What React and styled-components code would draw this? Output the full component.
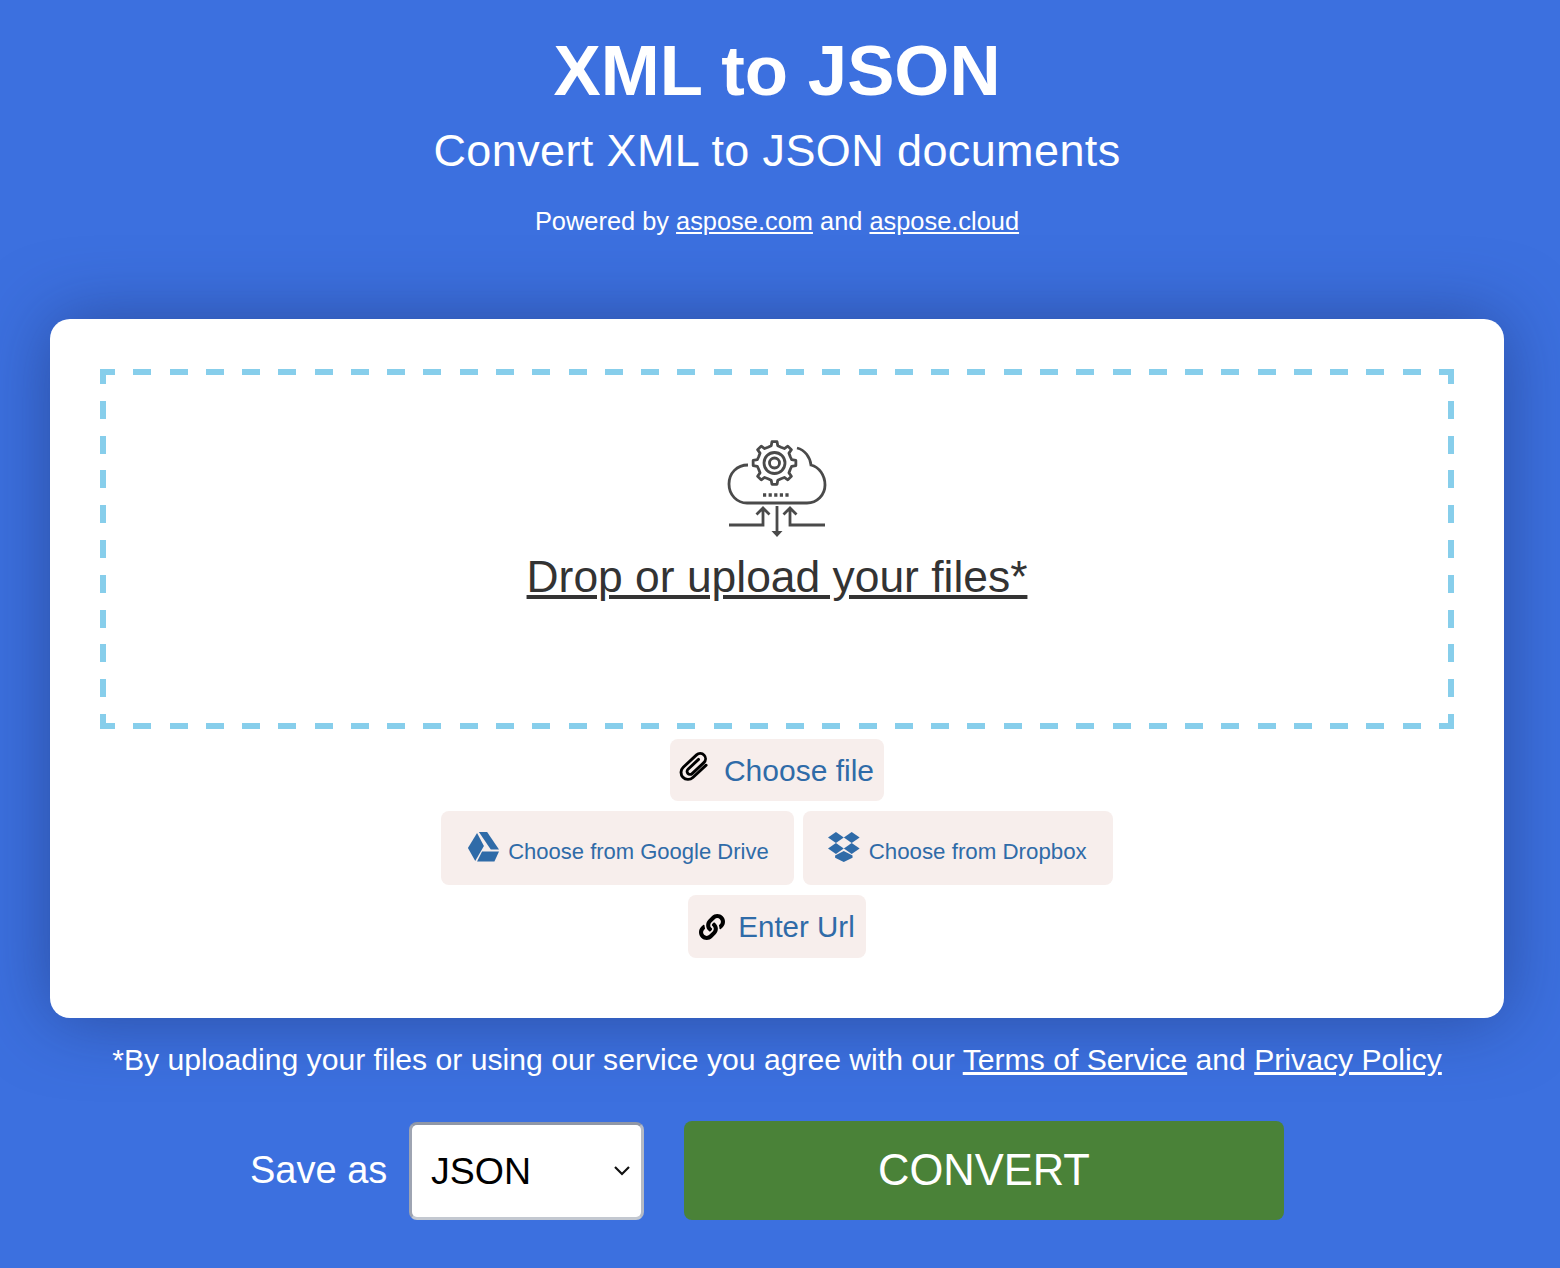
import React from "react";
import styled, { createGlobalStyle } from "styled-components";
import { FaLink } from "react-icons/fa";

const Global = createGlobalStyle`
  html, body { margin: 0; padding: 0; background: #3c70df; }
  body { font-family: "Liberation Sans", Arial, sans-serif; }
  * { box-sizing: border-box; }
`;

const Page = styled.div`
  width: 1560px;
  height: 1268px;
  overflow: hidden;
  padding: 0 56px 0 50px;
  background: #3c70df;
  color: #fff;
  display: flex;
  flex-direction: column;
  align-items: stretch;
`;

const Header = styled.header`
  height: 319px;
  display: flex;
  flex-direction: column;
  align-items: center;
`;

const Title = styled.h1`
  margin: 32px 0 0;
  font-size: 70.8px;
  line-height: 78px;
  font-weight: 700;
`;

const Subtitle = styled.h2`
  margin: 15px 0 0;
  font-size: 45px;
  line-height: 52px;
  font-weight: 400;
  letter-spacing: 0.38px;
`;

const Powered = styled.p`
  margin: 29px 0 0;
  font-size: 25.4px;
  line-height: 30px;
`;

const InlineLink = styled.a`
  color: #fff;
  text-decoration: underline;
`;

const Card = styled.main`
  height: 699px;
  background: #fff;
  border-radius: 20px;
  padding: 50px 50px 0;
  box-shadow: 0 0 70px rgba(30, 50, 110, 0.55);
  display: flex;
  flex-direction: column;
  align-items: center;
`;

const dash = "#87ceeb";
const DropZone = styled.div`
  width: 1354px;
  height: 360px;
  flex: none;
  display: flex;
  flex-direction: column;
  align-items: center;
  padding-top: 71px;
  background-image:
    repeating-linear-gradient(to right, ${dash} -3px, ${dash} 15px, transparent 15px, transparent 33.27px),
    repeating-linear-gradient(to right, ${dash} -3px, ${dash} 15px, transparent 15px, transparent 33.27px),
    repeating-linear-gradient(to bottom, ${dash} -3px, ${dash} 15px, transparent 15px, transparent 31.8px),
    repeating-linear-gradient(to bottom, ${dash} -3px, ${dash} 15px, transparent 15px, transparent 31.8px);
  background-size: 100% 6px, 100% 6px, 6px 100%, 6px 100%;
  background-position: 0 0, 0 100%, 0 0, 100% 0;
  background-repeat: no-repeat;
`;

const CloudIcon = styled.svg`
  width: 100px;
  height: 100px;
  display: block;
  flex: none;
  fill: none;
  stroke: #4a4a4a;
  stroke-width: 2.8;
`;

const DropLabel = styled.a`
  margin: 9px 0 0;
  font-size: 44.4px;
  line-height: 56px;
  color: #333;
  text-decoration: underline;
`;

const ButtonRow = styled.div`
  display: flex;
  justify-content: center;
  gap: 9px;
  margin-top: 10px;
`;

const SourceButton = styled.button`
  height: ${(p) => p.$h}px;
  padding: ${(p) => p.$pad};
  border: 0;
  border-radius: 8px;
  background: #f7eeec;
  color: #2f6ba8;
  font-family: inherit;
  font-size: ${(p) => p.$size}px;
  display: flex;
  align-items: center;
  gap: ${(p) => p.$gap}px;
  white-space: nowrap;
`;

const DarkIcon = styled.span`
  display: flex;
  color: #000;
  transform: translateY(${(p) => p.$up || 0}px);
`;

const BlueIcon = styled.svg`
  display: block;
  flex: none;
  fill: #2f6ba8;
  transform: translateY(-5px);
`;

const Notice = styled.p`
  margin: 24px 0 0;
  text-align: center;
  font-size: 30.15px;
  line-height: 36px;
  white-space: nowrap;
`;

const SaveRow = styled.div`
  display: flex;
  align-items: center;
  margin: 43px 0 0 200px;
`;

const SaveLabel = styled.label`
  font-size: 38px;
  width: 159px;
`;

const SelectWrap = styled.div`
  position: relative;
  width: 235px;
  height: 98px;
`;

const Select = styled.select`
  width: 100%;
  height: 100%;
  appearance: none;
  background: #fff;
  border-width: 3px;
  border-style: solid;
  border-color: #9097a6 #b4b9c4 #c3c8d0 #9ea4b2;
  border-radius: 8px;
  padding: 0 0 0 19px;
  font-family: inherit;
  font-size: 37.5px;
  color: #000;
  outline: 0;
`;

const Chevron = styled.svg`
  position: absolute;
  right: 13px;
  top: 43px;
  width: 18px;
  height: 11px;
  fill: none;
  stroke: #111;
  stroke-width: 2.2;
  pointer-events: none;
`;

const Convert = styled.button`
  margin-left: 40px;
  width: 600px;
  height: 99px;
  border: 0;
  border-radius: 8px;
  background: #4a8238;
  color: #fff;
  font-family: inherit;
  font-size: 43.5px;
`;

const Clip = () => (
  <svg width="32" height="32" viewBox="0 0 30 30" fill="none" stroke="#000" strokeWidth="2.7" strokeLinecap="round">
    <g transform="rotate(47 15 15)">
      <path d="M21.5 5.5 V22.5 A6.6 6.6 0 0 1 8.3 22.5 V5.5 A5 5 0 0 1 18.3 5.5 V20.5 A2.8 2.8 0 0 1 12.7 20.5 V7" />
    </g>
  </svg>
);

const DriveIcon = () => (
  <BlueIcon width="32" height="30" viewBox="0 0 35 30" preserveAspectRatio="none">
    <path d="M11 1 L1 16 L9 29 L18.5 14 Z" />
    <path d="M13 0 H22 L35 17.5 H26 Z" />
    <path d="M11 29.5 H30 L35 19.5 H16.5 Z" />
  </BlueIcon>
);

const DropboxIcon = () => (
  <BlueIcon width="32" height="30" viewBox="0 0 27 30" preserveAspectRatio="none">
    <path d="M6.7 0 L13.3 5.5 L6.7 11 L0 5.5 Z" />
    <path d="M20 0 L26.7 5.5 L20 11 L13.4 5.5 Z" />
    <path d="M6.7 11 L13.3 16.5 L6.7 22 L0 16.5 Z" />
    <path d="M20 11 L26.7 16.5 L20 22 L13.4 16.5 Z" />
    <path d="M6 23.5 L13.3 19 L20.7 23.5 V25.7 L13.3 30 L6 25.7 Z" />
  </BlueIcon>
);

const gearPath = () => {
  const cx = 47.5;
  const cy = 23;
  const teeth = 8;
  const pts = [];
  for (let i = 0; i < teeth; i++) {
    const a = (i * 2 * Math.PI) / teeth - Math.PI / 2;
    const step = (2 * Math.PI) / teeth;
    [
      [-0.5, 17],
      [-0.24, 17.5],
      [-0.15, 21.5],
      [0.15, 21.5],
      [0.24, 17.5],
    ].forEach(([f, r]) => {
      const t = a + f * step;
      pts.push(`${(cx + r * Math.cos(t)).toFixed(2)} ${(cy + r * Math.sin(t)).toFixed(2)}`);
    });
  }
  return `M${pts.join(" L")} Z`;
};

export default function App() {
  return (
    <Page>
      <Global />
      <Header>
        <Title>XML to JSON</Title>
        <Subtitle>Convert XML to JSON documents</Subtitle>
        <Powered>
          Powered by <InlineLink href="#">aspose.com</InlineLink> and{" "}
          <InlineLink href="#">aspose.cloud</InlineLink>
        </Powered>
      </Header>
      <Card>
        <DropZone>
          <CloudIcon viewBox="0 0 100 100">
            <path d="M21 25 C10 25 2 33 2 44 C2 55 10 63 20 63 H80 C90 63 98 55 98 45 C98 35 92 27 84 25 C83 17 78 10 70 8" />
            <path d={gearPath()} strokeLinejoin="round" />
            <circle cx="47.5" cy="23" r="10.5" />
            <circle cx="47.5" cy="23" r="5" />
            <path d="M36 55 H64" strokeDasharray="3.2 2.4" strokeWidth="3.4" />
            <path d="M2 85 H36 V68 M29.5 74.5 L36 68 L42.5 74.5" />
            <path d="M98 85 H63 V68 M56.5 74.5 L63 68 L69.5 74.5" />
            <path d="M50 66 V92" />
            <path d="M44.5 91 L50 97 L55.5 91 Z" fill="#4a4a4a" stroke="none" />
          </CloudIcon>
          <DropLabel href="#">Drop or upload your files*</DropLabel>
        </DropZone>
        <ButtonRow>
          <SourceButton $h={62} $pad="1px 10px 0 8px" $size={30} $gap={14}>
            <DarkIcon $up={-4}><Clip /></DarkIcon>
            Choose file
          </SourceButton>
        </ButtonRow>
        <ButtonRow>
          <SourceButton $h={74} $pad="8px 25px 0 26px" $size={22} $gap={9}>
            <DriveIcon />
            Choose from Google Drive
          </SourceButton>
          <SourceButton $h={74} $pad="8px 26px 0 25px" $size={22.3} $gap={9}>
            <DropboxIcon />
            Choose from Dropbox
          </SourceButton>
        </ButtonRow>
        <ButtonRow>
          <SourceButton $h={63} $pad="1px 11px 0 11px" $size={29.5} $gap={13}>
            <DarkIcon><FaLink size={26} /></DarkIcon>
            Enter Url
          </SourceButton>
        </ButtonRow>
      </Card>
      <Notice>
        *By uploading your files or using our service you agree with our{" "}
        <InlineLink href="#">Terms of Service</InlineLink> and{" "}
        <InlineLink href="#">Privacy Policy</InlineLink>
      </Notice>
      <SaveRow>
        <SaveLabel>Save as</SaveLabel>
        <SelectWrap>
          <Select defaultValue="JSON">
            <option>JSON</option>
          </Select>
          <Chevron viewBox="0 0 18 11"><path d="M2 2 L9 9 L16 2" /></Chevron>
        </SelectWrap>
        <Convert>CONVERT</Convert>
      </SaveRow>
    </Page>
  );
}
